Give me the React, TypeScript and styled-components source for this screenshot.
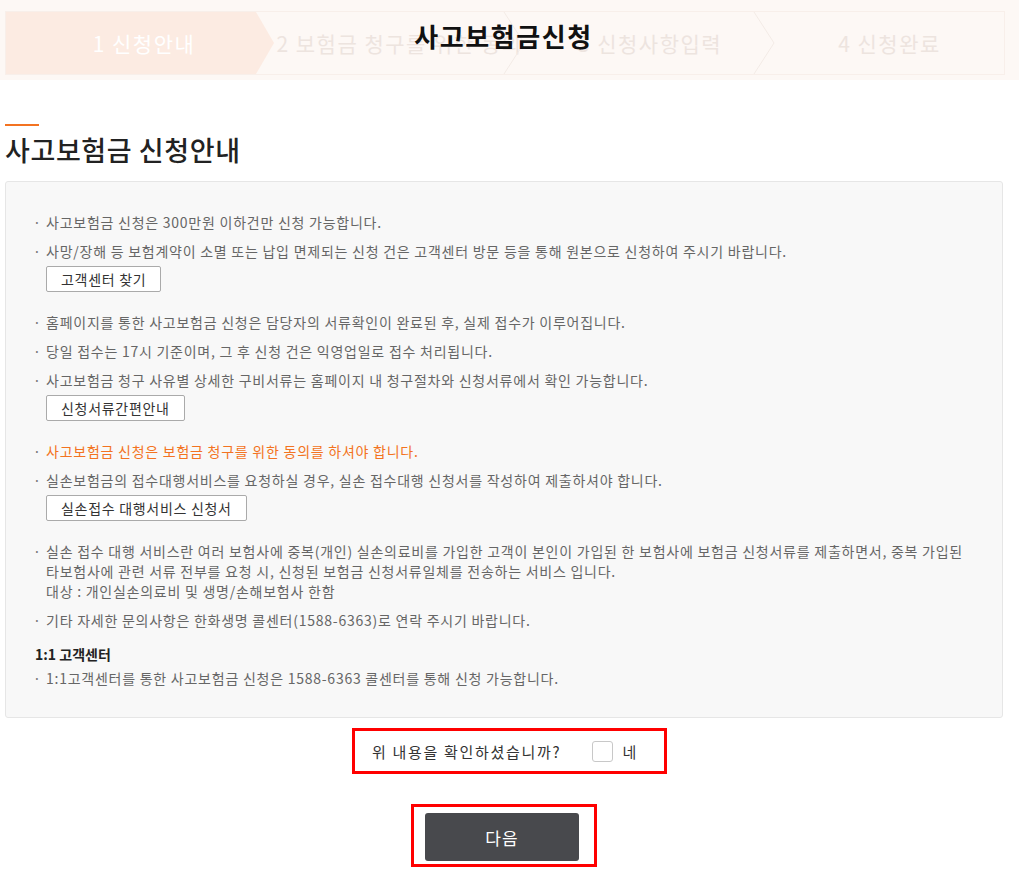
import styled, { createGlobalStyle } from "styled-components";

const GlobalStyle = createGlobalStyle`
  body {
    margin: 0;
    background: #ffffff;
    font-family: "Noto Sans CJK KR", "Noto Sans", sans-serif;
    color: #333;
  }
`;

const steps = ["1 신청안내", "2 보험금 청구를 위한 동의", "3 신청사항입력", "4 신청완료"];

// Header with faded step bar
const Header = styled.header`
  position: relative;
  height: 80px;
  box-sizing: border-box;
  padding: 11px 14px 5px 5px;
  background: #fdf8f5;
`;

const StepBar = styled.ol`
  display: grid;
  grid-template-columns: 268px 251px 250px 1fr;
  height: 64px;
  margin: 0;
  padding: 0;
  list-style: none;
  box-sizing: border-box;
  border: 1px solid #f8efea;
  background: #fdf8f5;
`;

const Step = styled.li<{ $active?: boolean }>`
  position: relative;
  display: flex;
  align-items: center;
  justify-content: center;
  font-size: 21px;
  letter-spacing: 1.5px;
  color: ${(p) => (p.$active ? "#ffffff" : "#ede4df")};
  background: ${(p) => (p.$active ? "#fcebe2" : "transparent")};
  clip-path: ${(p) =>
    p.$active ? "polygon(0 0, 250px 0, 100% 50%, 250px 100%, 0 100%)" : "none"};
  padding-left: ${(p) => (p.$active ? "8px" : "0")};
  white-space: nowrap;
`;

const Chevron = styled.svg`
  position: absolute;
  right: 0;
  top: 0;
  width: 22px;
  height: 62px;
`;

const Title = styled.h1`
  position: absolute;
  left: 0;
  right: 12px;
  top: 16px;
  margin: 0;
  text-align: center;
  font-size: 26px;
  font-weight: 700;
  letter-spacing: 1.6px;
  line-height: 40px;
  color: #111;
`;

// Main content
const Main = styled.main`
  padding-top: 44px;
`;

const Content = styled.div`
  margin: 0 16px 0 5px;
`;

const Accent = styled.div`
  width: 34px;
  height: 2px;
  background: #f37321;
`;

const Heading = styled.h2`
  margin: 8px 0 15px;
  font-size: 27px;
  font-weight: 500;
  letter-spacing: 0.6px;
  line-height: 32px;
  color: #222;
`;

const InfoBox = styled.section`
  box-sizing: border-box;
  background: #f8f8f8;
  border: 1px solid #e6e6e6;
  border-radius: 3px;
  padding: 30px 20px 29px 29px;
`;

const Group = styled.div`
  & + & {
    margin-top: 20px;
  }
`;

const Item = styled.p<{ $accent?: boolean }>`
  display: flex;
  margin: 0;
  font-size: 14px;
  letter-spacing: 0.75px;
  line-height: 20px;
  color: ${(p) => (p.$accent ? "#f37321" : "#666")};
  white-space: nowrap;

  & + & {
    margin-top: 9px;
  }

  &::before {
    content: "·";
    flex: 0 0 11px;
    margin-left: -2px;
    padding-right: 2px;
    color: #777;
    letter-spacing: 0;
  }
`;

const LinkButton = styled.button`
  display: block;
  height: 26px;
  margin: 5px 0 0 11px;
  padding: 0 14px;
  border: 1px solid #aaa;
  border-radius: 2px;
  background: #fff;
  font-family: inherit;
  font-size: 14px;
  letter-spacing: 0.7px;
  color: #333;
  cursor: pointer;
`;

const SubTitle = styled.h3`
  margin: 14px 0 4px;
  font-size: 14px;
  font-weight: 700;
  line-height: 20px;
  color: #222;
`;

const ConfirmWrap = styled.div`
  display: flex;
  justify-content: center;
  margin-top: 10px;
`;

const ConfirmBox = styled.label`
  display: flex;
  align-items: center;
  width: 315px;
  height: 46px;
  box-sizing: border-box;
  border: 3px solid #ff0000;
  padding: 0 0 0 17px;
  font-size: 15px;
  letter-spacing: 1.7px;
  color: #333;
`;

const Question = styled.span`
  margin-right: 31px;
`;

const Check = styled.span`
  width: 21px;
  height: 21px;
  box-sizing: border-box;
  border: 1px solid #c8c8c8;
  border-radius: 3px;
  background: #fff;
  margin-right: 9px;
`;

const NextWrap = styled.div`
  display: flex;
  justify-content: center;
  margin: 30px 16px 0 5px;
`;

const NextFrame = styled.div`
  width: 186px;
  height: 63px;
  box-sizing: border-box;
  border: 3px solid #ff0000;
  padding: 6px 15px 3px 11px;
`;

const NextButton = styled.button`
  width: 154px;
  height: 48px;
  border: none;
  border-radius: 3px;
  background: #48494d;
  color: #fff;
  font-family: inherit;
  font-size: 17px;
  letter-spacing: 1px;
  cursor: pointer;
`;

export default function App() {
  return (
    <>
      <GlobalStyle />
      <Header>
        <StepBar>
          {steps.map((s, i) => (
            <Step key={s} $active={i === 0}>
              {s}
              {i > 0 && i < 3 && (
                <Chevron viewBox="0 0 22 62" preserveAspectRatio="none">
                  <polyline points="1,0 21,31 1,62" fill="none" stroke="#f3ebe6" strokeWidth="1" />
                </Chevron>
              )}
            </Step>
          ))}
        </StepBar>
        <Title>사고보험금신청</Title>
      </Header>

      <Main>
        <Content>
          <Accent />
          <Heading>사고보험금 신청안내</Heading>

          <InfoBox>
            <Group>
              <Item>사고보험금 신청은 300만원 이하건만 신청 가능합니다.</Item>
              <Item>
                사망/장해 등 보험계약이 소멸 또는 납입 면제되는 신청 건은 고객센터 방문 등을 통해 원본으로 신청하여 주시기 바랍니다.
              </Item>
              <LinkButton>고객센터 찾기</LinkButton>
            </Group>

            <Group>
              <Item>홈페이지를 통한 사고보험금 신청은 담당자의 서류확인이 완료된 후, 실제 접수가 이루어집니다.</Item>
              <Item>당일 접수는 17시 기준이며, 그 후 신청 건은 익영업일로 접수 처리됩니다.</Item>
              <Item>사고보험금 청구 사유별 상세한 구비서류는 홈페이지 내 청구절차와 신청서류에서 확인 가능합니다.</Item>
              <LinkButton>신청서류간편안내</LinkButton>
            </Group>

            <Group>
              <Item $accent>사고보험금 신청은 보험금 청구를 위한 동의를 하셔야 합니다.</Item>
              <Item>실손보험금의 접수대행서비스를 요청하실 경우, 실손 접수대행 신청서를 작성하여 제출하셔야 합니다.</Item>
              <LinkButton>실손접수 대행서비스 신청서</LinkButton>
            </Group>

            <Group>
              <Item>
                <span>
                  실손 접수 대행 서비스란 여러 보험사에 중복(개인) 실손의료비를 가입한 고객이 본인이 가입된 한 보험사에 보험금 신청서류를 제출하면서, 중복 가입된
                  <br />
                  타보험사에 관련 서류 전부를 요청 시, 신청된 보험금 신청서류일체를 전송하는 서비스 입니다.
                  <br />
                  대상 : 개인실손의료비 및 생명/손해보험사 한함
                </span>
              </Item>
              <Item>기타 자세한 문의사항은 한화생명 콜센터(1588-6363)로 연락 주시기 바랍니다.</Item>
              <SubTitle>1:1 고객센터</SubTitle>
              <Item>1:1고객센터를 통한 사고보험금 신청은 1588-6363 콜센터를 통해 신청 가능합니다.</Item>
            </Group>
          </InfoBox>
        </Content>

        <ConfirmWrap>
          <ConfirmBox>
            <Question>위 내용을 확인하셨습니까?</Question>
            <Check />
            네
          </ConfirmBox>
        </ConfirmWrap>

        <NextWrap>
          <NextFrame>
            <NextButton>다음</NextButton>
          </NextFrame>
        </NextWrap>
      </Main>
    </>
  );
}
